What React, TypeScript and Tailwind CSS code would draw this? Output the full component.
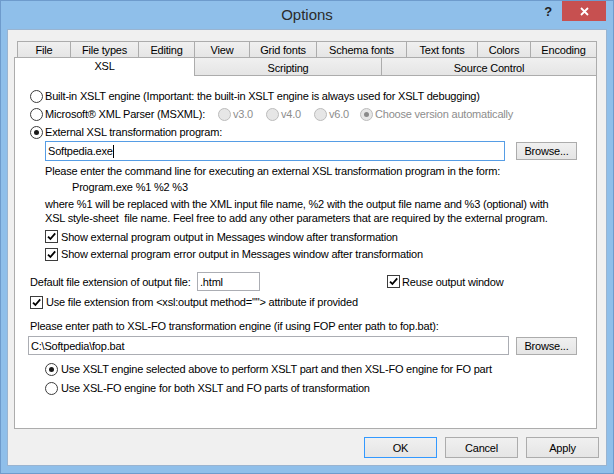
import React from "react";

function Radio({ checked = false, disabled = false }: { checked?: boolean; disabled?: boolean }) {
  return (
    <span
      className={
        "flex h-[13px] w-[13px] shrink-0 items-center justify-center rounded-full border " +
        (disabled ? "border-[#bcbcbc] bg-[#e6e6e6]" : "border-[#3c3c3c] bg-white")
      }
    >
      {checked ? (
        <span className={"h-[5px] w-[5px] rounded-full " + (disabled ? "bg-[#8a8a8a]" : "bg-[#1a1a1a]")} />
      ) : null}
    </span>
  );
}

function Check() {
  return (
    <span className="flex h-[13px] w-[13px] shrink-0 items-center justify-center border border-[#3c3c3c] bg-white">
      <svg width="11" height="11" viewBox="0 0 11 11">
        <path d="M2 5.6 L4.4 8 L9.2 2.4" fill="none" stroke="#000" strokeWidth="1.8" />
      </svg>
    </span>
  );
}

function Btn({ label, def = false, className = "" }: { label: string; def?: boolean; className?: string }) {
  return (
    <div
      className={
        "flex items-center justify-center border bg-linear-to-b from-[#f0f0f0] to-[#e5e5e5] " +
        (def ? "border-[#3399ff] " : "border-[#acacac] ") +
        className
      }
    >
      {label}
    </div>
  );
}

function Tab({ label, w, last = false }: { label: string; w: string; last?: boolean }) {
  return (
    <div
      className={
        "flex h-[16px] items-center justify-center border-l border-t border-[#acacac] bg-linear-to-b from-[#f0f0f0] to-[#e5e5e5] " +
        (last ? "border-r " : "") +
        w
      }
    >
      {label}
    </div>
  );
}

export default function App() {
  return (
    <div className="flex h-[474px] w-[614px] flex-col border border-[#6e9bcc] bg-[#8fbfea] font-['Liberation_Sans',Arial,sans-serif] text-[11px] leading-[14px] tracking-[-0.2px] text-black">
      {/* title bar */}
      <div className="flex h-[28px] shrink-0">
        <div className="flex-1" />
        <div className="flex items-center text-[15px] tracking-normal text-[#2b2b2b]">Options</div>
        <div className="flex flex-1 items-start justify-end">
          <div className="flex h-[22px] w-[16px] items-center justify-center text-[13px] font-bold text-[#222]">?</div>
          <div className="ml-[6px] mr-[7px] flex h-[20px] w-[44px] items-center justify-center bg-[#c75050]">
            <svg width="9" height="9" viewBox="0 0 9 9">
              <path d="M1 1 L8 8 M8 1 L1 8" stroke="#fff" strokeWidth="1.8" />
            </svg>
          </div>
        </div>
      </div>

      {/* client */}
      <div className="mx-[6px] flex h-[437px] shrink-0 flex-col border border-[#99b4d1] bg-[#f0f0f0] pt-[11px]">
        <div className="ml-[6px] flex w-[583px] flex-col">
          {/* row 1 tabs */}
          <div className="flex pl-[3px]">
            <Tab label="File" w="w-[53px]" />
            <Tab label="File types" w="w-[68px]" />
            <Tab label="Editing" w="w-[56px]" />
            <Tab label="View" w="w-[55px]" />
            <Tab label="Grid fonts" w="w-[67px]" />
            <Tab label="Schema fonts" w="w-[90px]" />
            <Tab label="Text fonts" w="w-[71px]" />
            <Tab label="Colors" w="w-[53px]" />
            <Tab label="Encoding" w="w-[67px]" last />
          </div>
          {/* row 2 tabs */}
          <div className="flex h-[18px]">
            <div className="relative z-10 flex h-[19px] w-[181px] justify-center border-l border-r border-t border-[#acacac] bg-white pt-[1px]">
              XSL
            </div>
            <div className="flex h-[18px] w-[187px] items-center justify-center border-r border-t border-[#acacac] bg-linear-to-b from-[#f0f0f0] to-[#e5e5e5] pt-[2px]">
              Scripting
            </div>
            <div className="flex h-[18px] w-[215px] items-center justify-center border-r border-t border-[#acacac] bg-linear-to-b from-[#f0f0f0] to-[#e5e5e5] pt-[2px]">
              Source Control
            </div>
          </div>
          {/* panel */}
          <div className="flex h-[354px] flex-col border border-[#acacac] bg-white pl-[15px] pt-[11px]">
            <div className="flex h-[18px] items-center">
              <Radio />
              <span className="ml-[2px]">Built-in XSLT engine (Important: the built-in XSLT engine is always used for XSLT debugging)</span>
            </div>
            <div className="flex h-[18px] items-center">
              <div className="flex w-[188px] items-center">
                <Radio />
                <span className="ml-[2px]">Microsoft® XML Parser (MSXML):</span>
              </div>
              <div className="flex w-[48px] items-center text-[#8d8d8d]">
                <Radio disabled />
                <span className="ml-[2px]">v3.0</span>
              </div>
              <div className="flex w-[48px] items-center text-[#8d8d8d]">
                <Radio disabled />
                <span className="ml-[2px]">v4.0</span>
              </div>
              <div className="flex w-[46px] items-center text-[#8d8d8d]">
                <Radio disabled />
                <span className="ml-[2px]">v6.0</span>
              </div>
              <div className="flex items-center text-[#8d8d8d]">
                <Radio disabled checked />
                <span className="ml-[2px]">Choose version automatically</span>
              </div>
            </div>
            <div className="flex h-[18px] items-center">
              <Radio checked />
              <span className="ml-[2px]">External XSL transformation program:</span>
            </div>
            <div className="flex h-[20px] items-center pl-[15px]">
              <div className="flex h-[20px] w-[460px] items-center border border-[#569de5] pl-[2px]">
                <span>Softpedia.exe</span>
                <span className="h-[13px] w-px bg-black" />
              </div>
              <Btn label="Browse..." className="ml-[11px] h-[18px] w-[61px]" />
            </div>
            <div className="flex h-[19px] items-center pl-[15px]">
              Please enter the command line for executing an external XSL transformation program in the form:
            </div>
            <div className="flex h-[14px] items-center pl-[42px]">Program.exe %1 %2 %3</div>
            <div className="mt-[3px] pl-[15px] leading-[14px]">
              <div>where %1 will be replaced with the XML input file name, %2 with the output file name and %3 (optional) with</div>
              <div>XSL style-sheet&nbsp; file name. Feel free to add any other parameters that are required by the external program.</div>
            </div>
            <div className="mt-[3px] flex h-[17px] items-center pl-[15px]">
              <Check />
              <span className="ml-[3px]">Show external program output in Messages window after transformation</span>
            </div>
            <div className="flex h-[18px] items-center pl-[15px]">
              <Check />
              <span className="ml-[3px]">Show external program error output in Messages window after transformation</span>
            </div>
            <div className="mt-[9px] flex h-[19px] items-center">
              <span className="w-[167px]">Default file extension of output file:</span>
              <div className="flex h-[19px] w-[63px] items-center border border-[#abadb3] pl-[2px]">.html</div>
              <div className="ml-[127px] flex items-center">
                <Check />
                <span className="ml-[2px]">Reuse output window</span>
              </div>
            </div>
            <div className="mt-[2px] flex h-[18px] items-center">
              <Check />
              <span className="ml-[3px]">Use file extension from &lt;xsl:output method=""&gt; attribute if provided</span>
            </div>
            <div className="mt-[6px] flex h-[18px] items-center">
              Please enter path to XSL-FO transformation engine (if using FOP enter path to fop.bat):
            </div>
            <div className="mt-[1px] -ml-[2px] flex h-[19px] items-center">
              <div className="flex h-[19px] w-[481px] items-center border border-[#abadb3] pl-[2px]">C:\Softpedia\fop.bat</div>
              <Btn label="Browse..." className="ml-[7px] h-[18px] w-[61px]" />
            </div>
            <div className="mt-[5px] flex h-[18px] items-center pl-[15px]">
              <Radio checked />
              <span className="ml-[3px]">Use XSLT engine selected above to perform XSLT part and then XSL-FO engine for FO part</span>
            </div>
            <div className="mt-[1px] flex h-[18px] items-center pl-[15px]">
              <Radio />
              <span className="ml-[3px]">Use XSL-FO engine for both XSLT and FO parts of transformation</span>
            </div>
          </div>
        </div>
        {/* buttons */}
        <div className="mt-[8px] flex justify-end gap-[8px] pr-[7px]">
          <Btn label="OK" def className="h-[21px] w-[73px]" />
          <Btn label="Cancel" className="h-[21px] w-[73px]" />
          <Btn label="Apply" className="h-[21px] w-[73px]" />
        </div>
      </div>
      <div className="flex-1" />
    </div>
  );
}
